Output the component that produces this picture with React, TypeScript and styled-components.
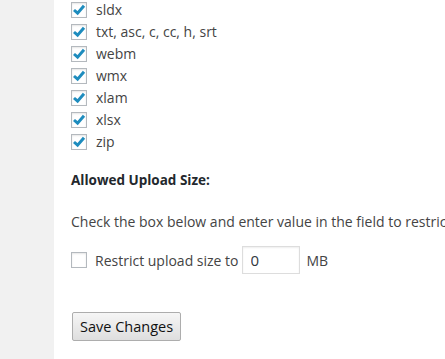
import React from "react"
import styled, { createGlobalStyle } from "styled-components"

const GlobalStyle = createGlobalStyle`
  html, body {
    margin: 0;
    padding: 0;
    background: #f1f1f1;
    font-family: "Open Sans", "Noto Sans", sans-serif;
    font-size: 14px;
    color: #444;
  }
`

const types = [
  "sldx",
  "txt, asc, c, cc, h, srt",
  "webm",
  "wmx",
  "xlam",
  "xlsx",
  "zip",
]

const Page = styled.div`
  display: flex;
  height: 359px;
  overflow: hidden;
`

const Sidebar = styled.div`
  width: 54px;
  flex-shrink: 0;
  background: #f1f1f1;
`

const Content = styled.div`
  flex: 1;
  min-width: 0;
  background: #fff;
  padding: 2px 0 0 17px;
  white-space: nowrap;
  overflow: hidden;
`

const TypeList = styled.ul`
  list-style: none;
  margin: 0;
  padding: 0;
  display: flex;
  flex-direction: column;
  gap: 6px;
`

const Row = styled.label`
  display: flex;
  align-items: center;
  gap: 9px;
  height: 16px;
  line-height: 16px;
`

const Box = styled.span`
  width: 16px;
  height: 16px;
  box-sizing: border-box;
  border: 1px solid #b4b9be;
  background: #fff;
  box-shadow: inset 0 1px 2px rgba(0, 0, 0, 0.1);
  display: flex;
  align-items: center;
  justify-content: center;
  flex-shrink: 0;
`

const Heading = styled.h3`
  margin: 22px 0 0;
  font-size: 13.5px;
  font-weight: 700;
  color: #23282d;
  line-height: 16px;
`

const Description = styled.p`
  margin: 26px 0 0;
  line-height: 16px;
`

const SizeRow = styled.div`
  display: flex;
  align-items: center;
  margin-top: 16px;
  height: 28px;
`

const SizeLabel = styled.span`
  margin-left: 8px;
  margin-right: 3px;
`

const Field = styled.input`
  width: 58px;
  height: 28px;
  box-sizing: border-box;
  border: 1px solid #ddd;
  box-shadow: inset 0 1px 2px rgba(0, 0, 0, 0.07);
  padding: 0 8px;
  font-family: inherit;
  font-size: 15px;
  color: #32373c;
  outline: none;
`

const Unit = styled.span`
  margin-left: 7px;
`

const SaveButton = styled.button`
  margin-top: 38px;
  margin-left: 1px;
  height: 29px;
  padding: 0 7px;
  font-family: "Open Sans", "Noto Sans", sans-serif;
  font-size: 14.5px;
  color: #111;
  border: 1px solid #adadad;
  border-radius: 2px;
  background: linear-gradient(to bottom, #f6f6f6, #dedede);
`

const Check = () => (
  <svg width="18" height="18" viewBox="0 0 16 16" style={{ margin: -1 }}>
    <path
      d="M3 8 L6.6 11.2 L13 3.8"
      fill="none"
      stroke="#1e8cbe"
      strokeWidth="3"
    />
  </svg>
)

export default function App() {
  return (
    <Page>
      <GlobalStyle />
      <Sidebar />
      <Content>
        <TypeList>
          {types.map(t => (
            <li key={t}>
              <Row>
                <Box>
                  <Check />
                </Box>
                {t}
              </Row>
            </li>
          ))}
        </TypeList>
        <Heading>Allowed Upload Size:</Heading>
        <Description>
          Check the box below and enter value in the field to restrict upload size.
        </Description>
        <SizeRow>
          <Box />
          <SizeLabel>Restrict upload size to</SizeLabel>
          <Field defaultValue="0" />
          <Unit>MB</Unit>
        </SizeRow>
        <SaveButton>Save Changes</SaveButton>
      </Content>
    </Page>
  )
}
